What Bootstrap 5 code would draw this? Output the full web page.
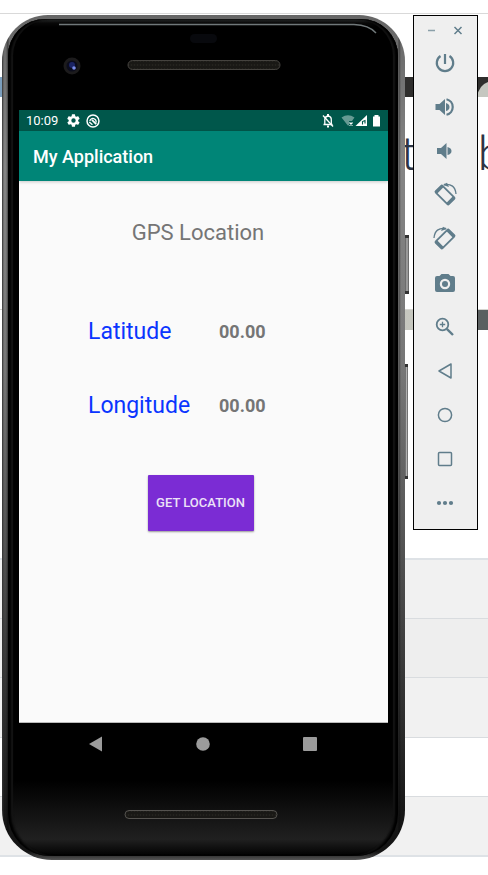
<!DOCTYPE html>
<html lang="en">
<head>
<meta charset="utf-8">
<meta name="viewport" content="width=device-width, initial-scale=1">
<title>My Application</title>
<link href="https://cdn.jsdelivr.net/npm/bootstrap@5.3.0/dist/css/bootstrap.min.css" rel="stylesheet">
<style>
body { font-family: Roboto, "Noto Sans", sans-serif; background: #fff; overflow-x: hidden; }
.desk { min-height: 100vh; padding: 15px 10px 15px 2px; gap: 8px; isolation: isolate; }

/* page behind the emulator */
.backdrop-page { position: absolute; inset: 0; z-index: -1; overflow: hidden; }
.bp-top { height: 14px; border-bottom: 1px solid #d9d9d9; }
.bp-gap { height: 63px; }
.bp-strip { height: 20px; background: linear-gradient(to right, #7b9ebd 30%, #2f2e2d 30%); }
.bp-strip svg { width: 11px; height: 20px; }
.bp-title { height: 212px; padding-top: 29px; font-size: 46px; line-height: 56px; font-weight: 300; color: #2d3444; }
.bp-t { width: 13px; }
.bp-b { width: 10px; }
.bp-photo { height: 21px; background: linear-gradient(to right, #fff 50%, #b9bab2 50%, #c8c9c1 90%, #5b6061 90%); border-top: 1px solid #d5d5d0; }
.bp-space { height: 228px; }
.bp-row { height: 60px; background: #f1f1f1; border-top: 1px solid #d9dcdf; }
.bp-row.first-row { border-top: 2px solid #dee2e6; }
.bp-row.shade { background: #eee; height: 59px; }
.bp-row.plain { background: #fff; height: 59px; }
.bp-row.last-row { border-bottom: 2px solid #dee2e6; height: 61px; }

/* phone body */
.phone { min-width: 0; border-radius: 46px 46px 50px 50px; padding: 4px 7px 4px 6px;
  background: linear-gradient(to right, #333, transparent 2px, transparent 4px, rgba(0,0,0,.45) 6px, transparent 7px, transparent calc(100% - 7px), rgba(0,0,0,.4) calc(100% - 6px), transparent calc(100% - 4px)), linear-gradient(#666 0, #858585 18%, #777 42%, #555 62%, #303030 82%, #161616 95%, #141414 99%, #555 100%); }
.phone-face { border-radius: 37px 37px 42px 42px; padding: 0 10px 0 11px; background: linear-gradient(#2b2e2e 0, #080808 4px, #000 8px, #000 91%, #202020 98%, #000 100%);
  box-shadow: inset 3px 0 2px #000, inset -3px 0 2px #000, inset 5px 0 1px #161616, inset -5px 0 1px #161616; }
.phone-top { height: 91px; }
.phone-top svg { height: 91px; }
.status { height: 21px; background: #00574b; color: #fff; font-size: 13px; line-height: 21px; padding: 0 6px 0 7px; }
.appbar { height: 50px; background: #008577; color: #fff; font-size: 18px; font-weight: 500; line-height: 52px; padding-left: 14px; box-shadow: 0 1px 3px rgba(0,0,0,.2); }
.app-body { height: 542px; background: #fafafa; padding-top: 36px; border-bottom: 1px solid #bbb; }
.screen-title { font-size: 22px; line-height: 32px; font-weight: 400; color: #757575; padding-right: 11px; margin-bottom: 67px; }
.reading { line-height: 32px; padding-left: 69px; margin-bottom: 42px; }
.reading dt { width: 131px; font-size: 23px; font-weight: 400; color: #0a35ff; }
.reading dd { font-size: 18px; font-weight: 700; color: #757575; margin: 0; }
.btn-locate { width: 106px; height: 56px; padding: 0; border: 0; border-radius: 1px; background: #7b2cd4; color: #ece2f7; font-size: 13px; font-weight: 500; box-shadow: 0 1px 2px rgba(0,0,0,.4); }
.btn-locate:hover { background: #6d24c0; color: #fff; }
.locate-wrap { padding-right: 6px; margin-top: 53px; }
.readings { margin: 0; }
.nav-keys { height: 42px; padding: 0 24px 0 22px; }
.nav-keys .btn, .tools .btn { border: 0; padding: 0; line-height: 0; }
.nav-keys .btn { width: 107px; }
.phone-chin { height: 91px; }
.phone-chin svg { height: 91px; }
.side-key { position: absolute; left: 100%; width: 4px; background: linear-gradient(to right, #555, #b0b0b0 50%, #555); border-top: 3px solid #333; border-bottom: 3px solid #333; }
.key-power { top: 220px; height: 59px; }
.key-volume { top: 349px; height: 115px; width: 3px; }

/* control panel */
.tools { width: 65px; background: #efefef; border: 1px solid #000; padding: 6px 2px 4px 0; }
.tools .btn { width: 100%; height: 44px; }
.tools .win { height: 19px; padding: 0 8px 0 9px; }
.tools .win .btn { width: 18px; height: 18px; }
.tools svg { stroke: #607d8b; fill: none; }
.tools .solid { fill: #607d8b; stroke: none; }
</style>
</head>
<body>
<main class="desk position-relative d-flex align-items-start">
  <div class="backdrop-page" aria-hidden="true">
    <div class="bp-top"></div>
    <div class="bp-gap"></div>
    <div class="bp-strip d-flex justify-content-end"><svg viewBox="0 0 11 20"><path d="M0 20Q2 8 11 5V20Z" fill="#c5c7c0"/></svg></div>
    <div class="bp-title d-flex justify-content-end"><span class="bp-t">t</span><span class="px-4"></span><span class="ps-3"></span><span class="bp-b">b</span></div>
    <div class="bp-photo"></div>
    <div class="bp-space"></div>
    <div class="bp-row first-row"></div>
    <div class="bp-row shade"></div>
    <div class="bp-row"></div>
    <div class="bp-row plain"></div>
    <div class="bp-row last-row"></div>
  </div>

  <section class="phone position-relative flex-grow-1">
    <span class="side-key key-power"></span>
    <span class="side-key key-volume"></span>
    <div class="phone-face">
      <div class="phone-top">
        <svg class="d-block w-100" viewBox="0 0 369 91">
          <defs><pattern id="mesh" width="3" height="4" patternUnits="userSpaceOnUse"><rect width="3" height="4" fill="#191815"/><circle cx="1.500" cy="2" r=".8" fill="#2a2822"/></pattern></defs>
          <path d="M40 5.500H335Q350 6 357 14" fill="none" stroke="#70787a" stroke-width="1.400"/>
          <rect x="171" y="15" width="27" height="9" rx="4.500" fill="#08090d"/>
          <circle cx="53" cy="47" r="8.500" fill="#1c1b1c"/><circle cx="53" cy="47" r="5.500" fill="#0b0c1c"/>
          <circle cx="53" cy="46" r="3" fill="#1b2464"/><circle cx="55" cy="49" r="1.800" fill="#7a8ce8"/>
          <rect x="109" y="41.500" width="152" height="9" rx="4.500" fill="url(#mesh)" stroke="#45433f"/>
        </svg>
      </div>
      <div class="status d-flex align-items-center">
        <span>10:09</span>
        <svg class="ms-2" width="15" height="15" viewBox="0 0 24 24" fill="#fff"><path d="M19.400 13a7.500 7.500 0 0 0 0-2l2.100-1.600c.2-.2.3-.4.1-.7l-2-3.400c-.1-.2-.4-.3-.6-.2l-2.500 1a7 7 0 0 0-1.700-1l-.4-2.600a.5.5 0 0 0-.5-.5h-4a.5.5 0 0 0-.5.5L9 5.100a7 7 0 0 0-1.700 1l-2.500-1c-.2-.1-.5 0-.6.2l-2 3.400c-.1.3-.1.500.1.700L4.400 11a7.500 7.500 0 0 0 0 2l-2.100 1.600c-.2.2-.2.4-.1.7l2 3.400c.1.2.4.3.6.2l2.500-1a7 7 0 0 0 1.700 1l.4 2.600c0 .3.2.5.5.5h4c.3 0 .5-.2.5-.5l.4-2.600a7 7 0 0 0 1.700-1l2.500 1c.2.1.5 0 .6-.2l2-3.400c.1-.3.1-.5-.1-.7zM12 15.500a3.500 3.500 0 1 1 0-7 3.500 3.500 0 0 1 0 7z" fill-rule="evenodd"/></svg>
        <svg class="ms-1" width="16" height="16" viewBox="0 0 15 15" fill="none" stroke="#fff"><circle cx="7.500" cy="7.500" r="5.600" stroke-width="1.400"/><path d="M4.500 7.500A3 3 0 1 1 10.300 9" stroke-width="1.200"/><path d="M6.500 6.500 10.500 10.500" stroke-width="1.600"/><path d="M4 8.500 7 11" stroke-width="1.200"/></svg>
        <svg class="ms-auto" width="62" height="17" viewBox="0 0 62 17">
          <g fill="none" stroke="#fff" stroke-width="1.300"><path d="M4.800 12V7.500Q5 4.500 8 4 11.500 4.500 11.300 8V12M3.500 12.500H12.500"/><path d="M8 2V4M7 14.500H9" stroke-width="2"/><path d="M3 3.500 13 14.500"/></g>
          <path d="M21.500 5.500Q28 1 34.500 5.500L32 9H29V13L28 13.800Z" fill="#fff" opacity=".4"/>
          <path d="M29.500 10.500 32.500 13.500M32.500 10.500 29.500 13.500" stroke="#fff" stroke-width="1.300"/>
          <path d="M35.500 14 47 3V14Z" fill="#fff"/><path d="M42.500 12.500V9.500L45 8.500V11.500" fill="none" stroke="#00574b" stroke-width="1.100"/>
          <path d="M53 4.500H54.500V3H58.500V4.500H60V14.500H53Z" fill="#fff"/>
        </svg>
      </div>
      <header class="appbar position-relative">My Application</header>
      <div class="app-body">
        <h1 class="screen-title text-center mt-0">GPS Location</h1>
        <dl class="readings">
          <div class="reading d-flex"><dt>Latitude</dt><dd>00.00</dd></div>
          <div class="reading d-flex"><dt>Longitude</dt><dd>00.00</dd></div>
        </dl>
        <div class="locate-wrap text-center"><button type="button" class="btn btn-locate">GET LOCATION</button></div>
      </div>
      <div class="nav-keys d-flex justify-content-center align-items-center">
        <button type="button" class="btn" aria-label="Back"><svg width="16" height="16" viewBox="0 0 16 16" fill="#9b9b9b"><path d="M1 8 14 .5V15.500Z"/></svg></button>
        <button type="button" class="btn" aria-label="Home"><svg width="16" height="16" viewBox="0 0 16 16" fill="#9b9b9b"><circle cx="8" cy="8" r="6.800"/></svg></button>
        <button type="button" class="btn" aria-label="Overview"><svg width="16" height="16" viewBox="0 0 16 16" fill="#9b9b9b"><rect x="1" y="1" width="14" height="14" rx="1"/></svg></button>
      </div>
      <div class="phone-chin">
        <svg class="d-block w-100" viewBox="0 0 369 91"><rect x="106" y="45.500" width="152" height="8" rx="4" fill="url(#mesh)" stroke="#55534f"/></svg>
      </div>
    </div>
  </section>

  <aside class="tools flex-shrink-0">
    <div class="win d-flex justify-content-between">
      <button type="button" class="btn" aria-label="Minimize"><svg width="18" height="18" viewBox="0 0 18 18"><path d="M5 8.500H12" stroke-width="1.500" opacity=".7"/></svg></button>
      <button type="button" class="btn" aria-label="Close"><svg width="18" height="18" viewBox="0 0 18 18"><path d="M5.500 5 12.500 12M12.500 5 5.500 12" stroke-width="1.500"/></svg></button>
    </div>
    <button type="button" class="btn" aria-label="Power"><svg width="24" height="24" viewBox="0 0 24 24"><path d="M12 3V13M7.500 5A8.200 8.200 0 1 0 16.500 5" stroke-width="2.200"/></svg></button>
    <button type="button" class="btn" aria-label="Volume up"><svg width="24" height="24" viewBox="0 0 24 24"><path class="solid" d="M2.500 9V15H6.500L12 20V4L6.500 9ZM13 8Q16.500 9 16.500 12T13 16Z"/><path d="M13.500 4.200A8 8 0 0 1 13.500 19.800" stroke-width="2.200"/></svg></button>
    <button type="button" class="btn" aria-label="Volume down"><svg width="24" height="24" viewBox="0 0 24 24"><path class="solid" d="M4 9V15H8L13.500 20V4L8 9ZM14.500 8Q18.500 9 18.500 12T14.500 16Z"/></svg></button>
    <button type="button" class="btn" aria-label="Rotate left"><svg width="26" height="26" viewBox="0 0 26 26"><g transform="rotate(-45 13 13)"><rect x="8.200" y="3.800" width="9.600" height="18.400" rx="1" stroke-width="1.800"/><path d="M8 5H18M8 21H18" stroke-width="3"/></g><path d="M12 2.500Q23 1 24 12" stroke-width="1.300"/><path class="solid" d="M11 3 15 .8 17 5Z"/></svg></button>
    <button type="button" class="btn" aria-label="Rotate right"><svg width="26" height="26" viewBox="0 0 26 26"><g transform="rotate(45 13 13)"><rect x="8.200" y="3.800" width="9.600" height="18.400" rx="1" stroke-width="1.800"/><path d="M8 5H18M8 21H18" stroke-width="3"/></g><path d="M14 2.500Q3 1 2 12" stroke-width="1.300"/><path class="solid" d="M15 3 11 .8 9 5Z"/></svg></button>
    <button type="button" class="btn" aria-label="Take screenshot"><svg width="24" height="24" viewBox="0 0 24 24"><path class="solid" fill-rule="evenodd" d="M8.500 3H15.500L17.500 5H20Q22 5 22 7V19Q22 21 20 21H4Q2 21 2 19V7Q2 5 4 5H6.500ZM12 7.800A5.200 5.200 0 1 0 12 18.200 5.200 5.200 0 1 0 12 7.800Z"/><circle class="solid" cx="12" cy="13" r="3"/></svg></button>
    <button type="button" class="btn" aria-label="Zoom"><svg width="24" height="24" viewBox="0 0 24 24"><circle cx="9.500" cy="9.500" r="5.800" stroke-width="1.800"/><path d="M13.800 13.800 20 20" stroke-width="2.400"/><path d="M9.500 6.800V12.200M6.800 9.500H12.200" stroke-width="1.300"/></svg></button>
    <button type="button" class="btn" aria-label="Back"><svg width="24" height="24" viewBox="0 0 24 24"><path d="M6 12 18 5V19Z" stroke-width="1.500" stroke-linejoin="round"/></svg></button>
    <button type="button" class="btn" aria-label="Home"><svg width="24" height="24" viewBox="0 0 24 24"><circle cx="12" cy="12" r="6.600" stroke-width="1.500"/></svg></button>
    <button type="button" class="btn" aria-label="Overview"><svg width="24" height="24" viewBox="0 0 24 24"><rect x="5.500" y="5.500" width="13" height="13" rx="1" stroke-width="1.500"/></svg></button>
    <button type="button" class="btn" aria-label="More"><svg width="24" height="24" viewBox="0 0 24 24"><g class="solid"><circle cx="6" cy="12" r="2.100"/><circle cx="12" cy="12" r="2.100"/><circle cx="18" cy="12" r="2.100"/></g></svg></button>
  </aside>
</main>
<script src="https://cdn.jsdelivr.net/npm/bootstrap@5.3.0/dist/js/bootstrap.bundle.min.js"></script>
</body>
</html>
